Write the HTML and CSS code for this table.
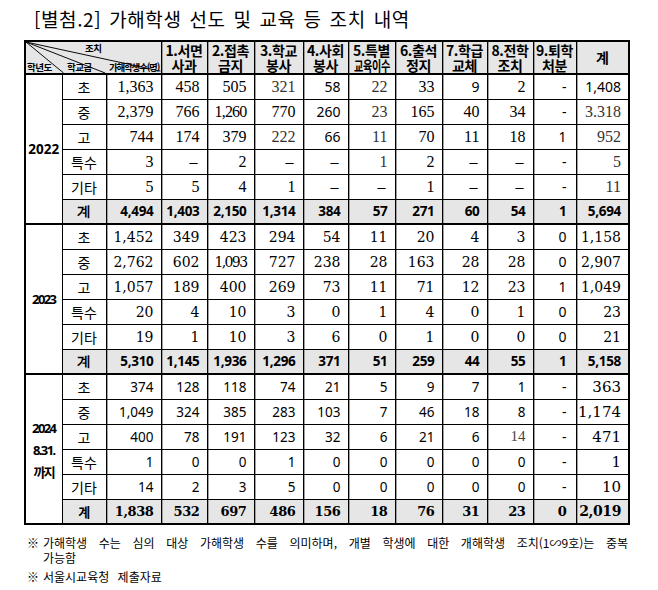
FILE: index.html
```html
<!DOCTYPE html>
<html lang="ko">
<head>
<meta charset="utf-8">
<title>가해학생 선도 및 교육 등 조치 내역</title>
<link rel="stylesheet" href="styles.css">
</head>
<body>
<div class="page">
  <h1 class="title">[별첨.2] 가해학생 선도 및 교육 등 조치 내역</h1>
  <table class="tbl">
    <colgroup>
      <col style="width:37px"><col style="width:44px"><col style="width:55px">
      <col style="width:46px"><col style="width:47px"><col style="width:49px">
      <col style="width:45px"><col style="width:47px"><col style="width:47px">
      <col style="width:45px"><col style="width:46px"><col style="width:43px">
      <col style="width:53px">
    </colgroup>
    <thead>
      <tr>
        <th colspan="3" class="diag">
          <svg class="diag-lines" viewBox="0 0 136 33" preserveAspectRatio="none">
            <line x1="0" y1="0" x2="38" y2="33"/>
            <line x1="0" y1="0" x2="80" y2="33"/>
            <line x1="0" y1="0" x2="136" y2="31"/>
          </svg>
          <div class="diag-text">
            <span class="diag-top">조치</span>
            <span class="diag-bottom">
              <span class="dl1">학년도</span>
              <span class="dl2">학교급</span>
              <span class="dl3">가해학생수(명)</span>
            </span>
          </div>
        </th>
        <th>1.서면<br>사과</th>
        <th>2.접촉<br>금지</th>
        <th>3.학교<br>봉사</th>
        <th>4.사회<br>봉사</th>
        <th>5.특별<br><span class="squeeze">교육이수</span></th>
        <th>6.출석<br>정지</th>
        <th>7.학급<br>교체</th>
        <th>8.전학<br>조치</th>
        <th>9.퇴학<br>처분</th>
        <th class="h-tot">계</th>
      </tr>
    </thead>
    <tbody class="blk y22">
      <tr>
        <td rowspan="6" class="year">2022</td>
        <td class="kind">초</td>
        <td>1,363</td><td>458</td><td>505</td><td class="lite">321</td><td class="sans">58</td><td class="lite">22</td><td>33</td><td class="sans">9</td><td>2</td><td class="c9">-</td><td class="tot sans">1,408</td>
      </tr>
      <tr>
        <td class="kind">중</td>
        <td>2,379</td><td>766</td><td class="nar">1,260</td><td>770</td><td class="sans">260</td><td class="lite">23</td><td>165</td><td>40</td><td>34</td><td class="c9">-</td><td class="tot lite">3.318</td>
      </tr>
      <tr>
        <td class="kind">고</td>
        <td>744</td><td>174</td><td>379</td><td class="lite">222</td><td class="sans">66</td><td class="lite">11</td><td>70</td><td>11</td><td>18</td><td class="c9">1</td><td class="tot lite">952</td>
      </tr>
      <tr>
        <td class="kind">특수</td>
        <td>3</td><td class="dash">–</td><td>2</td><td class="dash">–</td><td class="dash">–</td><td class="lite">1</td><td>2</td><td class="dash">–</td><td class="dash">–</td><td class="c9">-</td><td class="tot lite">5</td>
      </tr>
      <tr>
        <td class="kind">기타</td>
        <td>5</td><td>5</td><td>4</td><td>1</td><td class="dash">–</td><td class="dash">–</td><td>1</td><td class="dash">–</td><td class="dash">–</td><td class="c9">-</td><td class="tot lite">11</td>
      </tr>
      <tr class="sum">
        <td class="kind">계</td>
        <td>4,494</td><td>1,403</td><td>2,150</td><td>1,314</td><td>384</td><td>57</td><td>271</td><td>60</td><td>54</td><td class="c9">1</td><td class="tot">5,694</td>
      </tr>
    </tbody>
    <tbody class="blk y23">
      <tr>
        <td rowspan="6" class="year"><span class="cond">2023</span></td>
        <td class="kind">초</td>
        <td>1,452</td><td>349</td><td>423</td><td>294</td><td>54</td><td>11</td><td>20</td><td>4</td><td>3</td><td class="c9">0</td><td class="tot">1,158</td>
      </tr>
      <tr>
        <td class="kind">중</td>
        <td>2,762</td><td>602</td><td class="nar">1,093</td><td>727</td><td>238</td><td>28</td><td>163</td><td>28</td><td>28</td><td class="c9">0</td><td class="tot">2,907</td>
      </tr>
      <tr>
        <td class="kind">고</td>
        <td>1,057</td><td>189</td><td>400</td><td>269</td><td>73</td><td>11</td><td>71</td><td>12</td><td>23</td><td class="c9">1</td><td class="tot">1,049</td>
      </tr>
      <tr>
        <td class="kind">특수</td>
        <td>20</td><td>4</td><td>10</td><td>3</td><td>0</td><td>1</td><td>4</td><td>0</td><td>1</td><td class="c9">0</td><td class="tot">23</td>
      </tr>
      <tr>
        <td class="kind">기타</td>
        <td>19</td><td>1</td><td>10</td><td>3</td><td>6</td><td>0</td><td>1</td><td>0</td><td>0</td><td class="c9">0</td><td class="tot">21</td>
      </tr>
      <tr class="sum">
        <td class="kind">계</td>
        <td>5,310</td><td>1,145</td><td>1,936</td><td>1,296</td><td>371</td><td>51</td><td>259</td><td>44</td><td>55</td><td class="c9">1</td><td class="tot">5,158</td>
      </tr>
    </tbody>
    <tbody class="blk y24">
      <tr class="tight">
        <td rowspan="6" class="year"><span class="cond">2024<br>8.31.<br>까지</span></td>
        <td class="kind">초</td>
        <td class="g">374</td><td>128</td><td>118</td><td>74</td><td>21</td><td>5</td><td>9</td><td>7</td><td>1</td><td class="c9">-</td><td class="tot">363</td>
      </tr>
      <tr class="tight">
        <td class="kind">중</td>
        <td class="g">1,049</td><td>324</td><td>385</td><td>283</td><td>103</td><td>7</td><td>46</td><td>18</td><td>8</td><td class="c9">-</td><td class="tot">1,174</td>
      </tr>
      <tr class="tight">
        <td class="kind">고</td>
        <td class="g">400</td><td>78</td><td>191</td><td>123</td><td>32</td><td>6</td><td>21</td><td>6</td><td class="lite">14</td><td class="c9">-</td><td class="tot">471</td>
      </tr>
      <tr class="tight">
        <td class="kind">특수</td>
        <td class="g">1</td><td>0</td><td>0</td><td>1</td><td>0</td><td>0</td><td>0</td><td>0</td><td>0</td><td class="c9">-</td><td class="tot">1</td>
      </tr>
      <tr class="tight">
        <td class="kind">기타</td>
        <td class="g">14</td><td>2</td><td>3</td><td>5</td><td>0</td><td>0</td><td>0</td><td>0</td><td>0</td><td class="c9">-</td><td class="tot">10</td>
      </tr>
      <tr class="sum">
        <td class="kind">계</td>
        <td>1,838</td><td>532</td><td>697</td><td>486</td><td>156</td><td>18</td><td>76</td><td>31</td><td>23</td><td class="c9">0</td><td class="tot">2,019</td>
      </tr>
    </tbody>
  </table>
  <div class="notes">
    <p class="note"><span class="mark">※</span><span class="note-text">가해학생 수는 심의 대상 가해학생 수를 의미하며, 개별 학생에 대한 개해학생 조치(1∽9호)는 중복 가능함</span></p>
    <p class="note"><span class="mark">※</span><span class="note-text">서울시교육청 제출자료</span></p>
  </div>
</div>
</body>
</html>
```
FILE: styles.css
```css
html, body {
  margin: 0;
  padding: 0;
  background: #fff;
}

body {
  font-family: "Noto Sans CJK KR", "Noto Sans", sans-serif;
  color: #000;
}

.page {
  width: 658px;
  height: 590px;
  overflow: hidden;
}

.title {
  margin: 0;
  padding: 4px 0 0 34px;
  height: 36px;
  font-size: 19px;
  font-weight: 400;
  line-height: 30px;
  letter-spacing: 0.6px;
  word-spacing: 2px;
}

.tbl {
  margin-left: 24px;
  border-collapse: collapse;
  table-layout: fixed;
  width: 605px;
  border: 2px solid #000;
}

.tbl th,
.tbl td {
  border: 1px solid #000;
  padding: 0;
  height: 25px;
  box-sizing: border-box;
}

.tbl thead th {
  background: #e6e6e6;
  font-weight: 700;
  font-size: 14px;
  line-height: 15px;
  height: 33px;
  text-align: center;
  letter-spacing: -0.4px;
  white-space: nowrap;
  box-shadow: inset 1px 0 0 #9a9a9a;
}

.tbl thead {
  border-bottom: 2px solid #000;
}

.h-tot {
  font-size: 15px;
}

.squeeze {
  display: inline-block;
  transform: scaleX(0.72);
  margin: 0 -8px;
}

/* diagonal header cell */
.tbl thead th.diag {
  position: relative;
  padding: 0;
  text-align: left;
  box-shadow: none;
}

.diag-lines {
  position: absolute;
  left: 0;
  top: 0;
  width: 100%;
  height: 100%;
}

.diag-lines line {
  stroke: #000;
  stroke-width: 1;
}

.diag-text {
  position: relative;
  display: flex;
  flex-direction: column;
  justify-content: space-between;
  height: 31px;
  font-size: 9.5px;
  line-height: 11px;
  letter-spacing: -0.5px;
}

.diag-top {
  padding-left: 59px;
  padding-top: 1px;
}

.diag-bottom {
  display: flex;
  align-items: flex-end;
}

.dl1 {
  width: 38px;
  padding-left: 1px;
}

.dl2 {
  width: 42px;
  padding-left: 2px;
}

.dl3 {
  display: inline-block;
  letter-spacing: -1.2px;
}

/* body */
.blk {
  border-top: 2px solid #000;
}

.tbl tbody td {
  text-align: right;
  padding-right: 7px;
  white-space: nowrap;
  box-shadow: inset 1px 0 0 #a0a0a0;
}

.tbl tbody td.kind {
  text-align: center;
  padding-right: 0;
  font-family: "Noto Sans CJK KR", sans-serif;
  font-size: 14px;
  font-weight: 400;
  box-shadow: none;
}

.tbl tbody tr.sum td.kind {
  font-weight: 700;
  font-size: 14px;
}

.tbl tbody td.year {
  text-align: center;
  padding: 0;
  font-family: "Noto Sans", "Noto Sans CJK KR", sans-serif;
  font-weight: 700;
  font-size: 13.5px;
  background: #fff;
  box-shadow: none;
}

.cond {
  display: inline-block;
  letter-spacing: -1.6px;
  font-size: 13px;
  line-height: 22px;
}

.y24 .cond {
  padding-top: 2px;
}

/* 2022 block */
.y22 td {
  font-family: "Liberation Serif", serif;
  font-size: 16px;
}

.y22 td.lite {
  color: #333;
}

.y22 td.nar {
  letter-spacing: -0.8px;
}

.y22 td.dash {
  padding-right: 9px;
}

/* 2023 block */
.y23 td {
  font-family: "DejaVu Serif", serif;
  font-size: 14px;
}

.y23 td.nar {
  letter-spacing: -1.6px;
}

/* 2024 block */
.y24 td {
  font-family: "Noto Sans", sans-serif;
  font-size: 13.5px;
}

.y24 td.lite {
  font-family: "Liberation Serif", serif;
  font-size: 15px;
  color: #444;
}

.tight td {
  padding-right: 3px;
}

.tbl tbody .tight td.g {
  padding-right: 7px;
}

.y24 td.tot {
  font-family: "DejaVu Serif", serif;
  font-size: 15px;
}

/* shared column overrides */
.tbl tbody td.sans,
.tbl tbody td.c9 {
  font-family: "Noto Sans", sans-serif;
  font-size: 14px;
}

.tbl tbody td.c9 {
  padding-right: 9px;
}

.tbl tbody tr.sum td {
  background: #e6e6e6;
  font-family: "Noto Sans", sans-serif;
  font-weight: 700;
  font-size: 13.5px;
  letter-spacing: -0.3px;
}

.tbl tbody.y24 tr.sum td {
  font-family: "DejaVu Serif", serif;
  font-size: 13px;
  letter-spacing: -0.4px;
}

.tbl tbody.y24 tr.sum td.tot {
  font-size: 14px;
}

.tbl tbody.y24 tr.sum td.kind {
  font-family: "Noto Sans CJK KR", sans-serif;
}

/* notes */
.notes {
  margin-top: 10px;
  padding-left: 27px;
  width: 601px;
}

.note {
  margin: 0 0 4px 0;
  display: flex;
  font-size: 12px;
  line-height: 15px;
}

.mark {
  flex: 0 0 16px;
}

.note-text {
  flex: 1;
  text-align: justify;
  word-break: keep-all;
  word-spacing: 5px;
}
```
